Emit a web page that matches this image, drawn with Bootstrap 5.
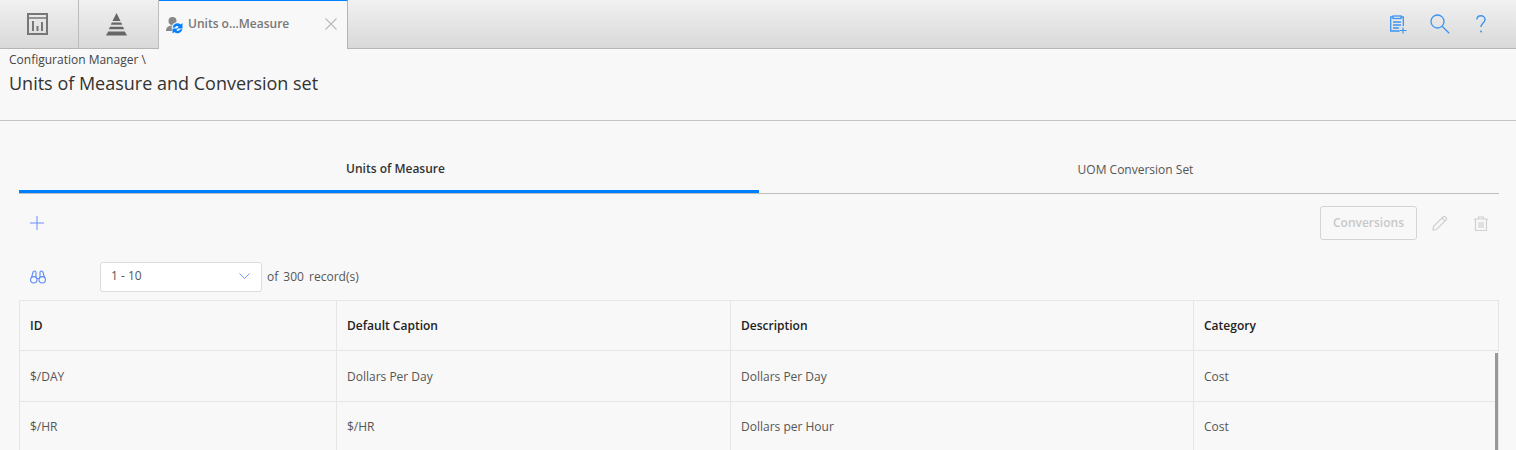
<!DOCTYPE html>
<html lang="en">
<head>
<meta charset="utf-8">
<title>Units of Measure</title>
<link href="https://cdn.jsdelivr.net/npm/bootstrap@5.3.0/dist/css/bootstrap.min.css" rel="stylesheet">
<style>
html,body{height:450px;overflow:hidden}
body{background:#f8f8f8;font-family:"Open Sans",sans-serif;font-size:12px;color:#444}
.topbar{height:49px;background:linear-gradient(#f1f1f1,#d9d9d9);border-bottom:1px solid #b5b5b5}
.apptab{width:79px;height:48px;border-right:1px solid #bdbdbd;padding-right:4px}
.apptab-second{width:80px}
.opentab{width:189px;height:49px;background:#f8f8f8;border-top:1px solid #0080ff;border-right:1px solid #b5b5b5;padding:0 10px 0 7px}
.opentab-label{font-size:12px;font-weight:600;color:#777;margin-left:5px;margin-bottom:3px;white-space:nowrap}
.close-mark{margin-bottom:3px}
.topicons{gap:22px;padding-right:30px}
.clip-icon{margin-right:1px}
.crumbs{padding:2px 9px 0;height:72px;border-bottom:1px solid #c4c4c4}
.crumb-line{font-size:12px;line-height:17px;color:#444}
.page-title{font-size:18px;font-weight:400;line-height:24px;color:#333;margin:3px 0 0}
.content-wrap{padding:0 17px 0 19px}
.uom-tabs{margin-top:31px;height:42px;border-bottom:1px solid #bdbdbd}
.uom-tab{flex:1 1 50%;text-align:center;font-size:12px;color:#444;height:41px;padding-left:13px}
.uom-tab.on{font-weight:600;color:#333;border-bottom:3px solid #0080ff;line-height:33px}
.uom-tab.off{font-weight:500;color:#555;line-height:35px}
.action-row{height:59px;padding:0 11px 1px}
.conv-btn{width:97px;height:34px;padding:0;font-size:12px;font-weight:600;color:#c8c8c8;background:transparent;border:1px solid #d4d4d4;border-radius:3px}
.conv-btn:disabled{color:#c8c8c8;border-color:#d4d4d4;background:transparent;opacity:1}
.pencil-gap{margin-left:15px}
.trash-gap{margin-left:26px}
.pager-row{height:47px;padding-left:11px}
.finder{width:70px}
.range-box{width:162px;height:30px;margin-top:1px;background:#fff;border:1px solid #ddd;border-radius:3px;padding:0 11px 3px 10px;color:#555;font-size:12px}
.pager-note{margin-left:5px;color:#555;font-size:12px;word-spacing:2px;padding-top:1px}
.grid-holder{position:relative;height:150px;overflow:hidden}
.uom-table{table-layout:fixed;width:1479px;margin:0;border-collapse:collapse;--bs-table-bg:transparent;font-size:12px}
.uom-table th,.uom-table td{border:1px solid #e6e6e6;padding:0 10px;vertical-align:middle;box-shadow:none}
.uom-table th{height:50px;font-weight:600;color:#222}
.uom-table td{height:51px;color:#555}
.uom-table .first-row td{padding-top:2px}
.scroll-thumb{position:absolute;right:1px;top:53px;width:3px;height:100px;background:#999}
</style>
</head>
<body>
<div class="topbar d-flex align-items-start">
  <div class="apptab d-flex align-items-center justify-content-center">
    <svg width="21" height="22" viewBox="0 0 21 22" fill="none" stroke="#777"><rect x="1" y="1" width="19" height="20" stroke-width="2"/><path d="M1 5h19" stroke-width="1.500"/><path d="M6 18V8M10.500 18v-5M15 18V9" stroke-width="2"/></svg>
  </div>
  <div class="apptab apptab-second d-flex align-items-center justify-content-center">
    <svg width="23" height="23" viewBox="0 0 23 23" fill="#666"><path d="M11.500 0l4 8h-8z"/><path d="M6.800 9.500h9.400l1 2.200H5.800z"/><path d="M5 13.800h13l1.100 2.400H3.900z"/><path d="M3.200 18.400h16.600l2.200 4H1z"/></svg>
  </div>
  <div class="opentab d-flex align-items-center">
    <svg width="17" height="18" viewBox="0 0 17 18"><circle cx="6.500" cy="5" r="4" fill="#888"/><path d="M0 15c0-4 3-5.500 6.500-5.500S12 11 12 15z" fill="#888"/><circle cx="11.500" cy="12" r="6" fill="#f8f8f8"/><path d="M6.500 11.500a5 5 0 0 1 8.200-3l1.800-1.500v5.500H11l1.700-1.800a2.600 2.600 0 0 0-3.700.8zM16.500 13a5 5 0 0 1-8.200 3l-1.800 1.500V12.500H12l-1.700 1.800a2.600 2.600 0 0 0 3.700-.8z" fill="#0080ff"/></svg>
    <span class="opentab-label">Units o...Measure</span>
    <svg class="close-mark ms-auto" width="12" height="12" viewBox="0 0 12 12" stroke="#bbb" stroke-width="1.200"><path d="M.5.500l11 11M11.500.500l-11 11"/></svg>
  </div>
  <div class="topicons ms-auto d-flex align-items-center h-100">
    <svg class="clip-icon" width="17" height="19" viewBox="0 0 17 19" fill="none" stroke="#3d94f0" stroke-width="1.300"><path d="M3 2H.7v14h9M11 2h2.300v9"/><rect x="3" y="1" width="8" height="2.500"/><path d="M3 7h8M3 10h8M3 13h6"/><path d="M13 12.500v6M10 15.500h6.500" stroke-width="1.200"/></svg>
    <svg width="20" height="20" viewBox="0 0 20 20" fill="none" stroke="#3d94f0" stroke-width="1.300"><circle cx="7.500" cy="7.500" r="6.500"/><path d="M12.200 12.200l7 7"/></svg>
    <svg class="ms-1" width="10" height="19" viewBox="0 0 10 19" fill="none" stroke="#3d94f0" stroke-width="1.400"><path d="M.8 4.500C1 2 3 .8 5 .8s4 1.400 4 3.600c0 3.500-4 3.600-4 7.600"/><circle cx="5" cy="16.500" r="1" fill="#3d94f0" stroke="none"/></svg>
  </div>
</div>

<div class="crumbs">
  <div class="crumb-line">Configuration Manager \</div>
  <h1 class="page-title">Units of Measure and Conversion set</h1>
</div>

<div class="content-wrap">
  <div class="uom-tabs d-flex">
    <div class="uom-tab on">Units of Measure</div>
    <div class="uom-tab off">UOM Conversion Set</div>
  </div>

  <div class="action-row d-flex align-items-center">
    <svg width="14" height="14" viewBox="0 0 14 14" stroke="#6f8cff" stroke-width="1"><path d="M7 0v14M0 7h14"/></svg>
    <div class="ms-auto d-flex align-items-center">
      <button class="btn conv-btn" type="button" disabled>Conversions</button>
      <svg class="pencil-gap" width="16" height="16" viewBox="0 0 16 16" fill="none" stroke="#d0d0d0" stroke-width="1.200"><path d="M1.500 11.500L11 2a1.700 1.700 0 0 1 2.500 0l.5.500a1.700 1.700 0 0 1 0 2.500L4.500 14.500l-3.500.5zM10 3l3 3"/></svg>
      <svg class="trash-gap" width="14" height="15" viewBox="0 0 14 15" fill="none" stroke="#d0d0d0" stroke-width="1.200"><path d="M0 3h14M4.500 3V1h5v2M1.500 3v11.500h11V3M5 6v6M7 6v6M9 6v6"/></svg>
    </div>
  </div>

  <div class="pager-row d-flex align-items-center">
    <div class="finder">
      <svg class="d-block" width="16" height="14" viewBox="0 0 16 14" fill="none" stroke="#5b8bf5" stroke-width="1.100"><circle cx="3.800" cy="9.800" r="3.200"/><circle cx="12.200" cy="9.800" r="3.200"/><path d="M1.500 7.500L3 2.500a1.500 1.500 0 0 1 3 0V7M14.500 7.500L13 2.500a1.500 1.500 0 0 0-3 0V7M6.500 8.500h3"/></svg>
    </div>
    <div class="range-box d-flex align-items-center justify-content-between">
      <span>1 - 10</span>
      <svg width="11" height="6" viewBox="0 0 11 6" fill="none" stroke="#6f9cf5"><path d="M.5.500l5 5 5-5"/></svg>
    </div>
    <span class="pager-note">of 300 record(s)</span>
  </div>

  <div class="grid-holder">
    <table class="table uom-table">
      <colgroup><col style="width:317px"><col style="width:394px"><col style="width:463px"><col style="width:305px"></colgroup>
      <thead><tr><th>ID</th><th>Default Caption</th><th>Description</th><th>Category</th></tr></thead>
      <tbody>
        <tr class="first-row"><td>$/DAY</td><td>Dollars Per Day</td><td>Dollars Per Day</td><td>Cost</td></tr>
        <tr><td>$/HR</td><td>$/HR</td><td>Dollars per Hour</td><td>Cost</td></tr>
      </tbody>
    </table>
    <div class="scroll-thumb"></div>
  </div>
</div>
</body>
</html>
